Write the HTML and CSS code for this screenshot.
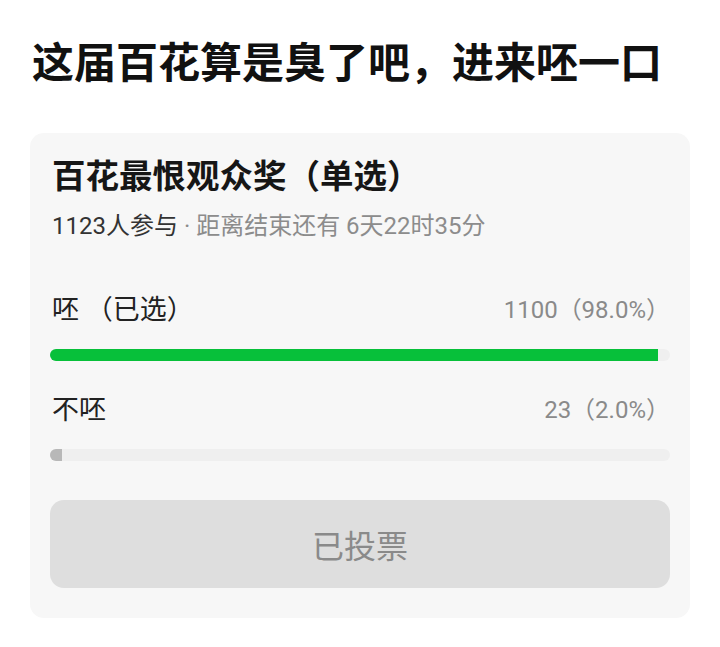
FILE: index.html
```html
<!DOCTYPE html>
<html lang="zh-CN">
<head>
<meta charset="utf-8">
<link rel="stylesheet" href="styles.css">
</head>
<body>
<div class="page">
  <h1 class="headline">这届百花算是臭了吧，进来呸一口</h1>
  <div class="card">
    <div class="card-title">百花最恨观众奖（单选）</div>
    <div class="meta"><span class="meta-count">1123人参与</span><span class="meta-rest"> · 距离结束还有 6天22时35分</span></div>
    <div class="option first">
      <div class="option-row">
        <span class="option-label">呸 （已选）</span>
        <span class="option-count">1100（98.0%）</span>
      </div>
      <div class="track"><div class="fill fill-green" style="width:98%"></div></div>
    </div>
    <div class="option">
      <div class="option-row">
        <span class="option-label">不呸</span>
        <span class="option-count">23（2.0%）</span>
      </div>
      <div class="track"><div class="fill fill-gray" style="width:2%"></div></div>
    </div>
    <div class="button">已投票</div>
  </div>
</div>
</body>
</html>
```

FILE: styles.css
```css
html, body {
  margin: 0;
  padding: 0;
  background: #ffffff;
}
body {
  font-family: "Roboto", "Noto Sans CJK SC", sans-serif;
  color: #1a1a1a;
}
.page {
  padding: 39px 30px 0 30px;
}
.headline {
  margin: 0 0 44px 2px;
  font-size: 42px;
  line-height: 50px;
  font-weight: 700;
  color: #111111;
  white-space: nowrap;
}
.card {
  width: 660px;
  box-sizing: border-box;
  background: #f7f7f7;
  border-radius: 14px;
  padding: 24px 20px 30px 20px;
}
.card-title {
  margin-left: 2px;
  font-size: 33.5px;
  line-height: 40px;
  font-weight: 700;
  color: #161616;
}
.meta {
  margin: 14px 0 0 2px;
  font-size: 24px;
  line-height: 30px;
  white-space: nowrap;
}
.meta-count {
  color: #333333;
}
.meta-rest {
  color: #8c8c8c;
}
.option {
  margin-top: 31px;
}
.option.first {
  margin-top: 51px;
}
.option-row {
  display: flex;
  justify-content: space-between;
  align-items: center;
  height: 36px;
}
.option-label {
  margin-left: 2px;
  font-size: 27px;
  line-height: 36px;
  color: #222222;
  white-space: pre;
}
.option-count {
  font-size: 24px;
  line-height: 36px;
  color: #8a8a8a;
}
.track {
  margin-top: 21px;
  height: 12px;
  background: #efefef;
  border-radius: 6px;
  overflow: hidden;
}
.fill {
  height: 100%;
}
.fill-green {
  background: #07c03a;
}
.fill-gray {
  background: #b8b8b8;
}
.button {
  margin-top: 39px;
  height: 88px;
  border-radius: 14px;
  background: #dedede;
  color: #8a8a8a;
  font-size: 32px;
  display: flex;
  align-items: center;
  justify-content: center;
}
```
